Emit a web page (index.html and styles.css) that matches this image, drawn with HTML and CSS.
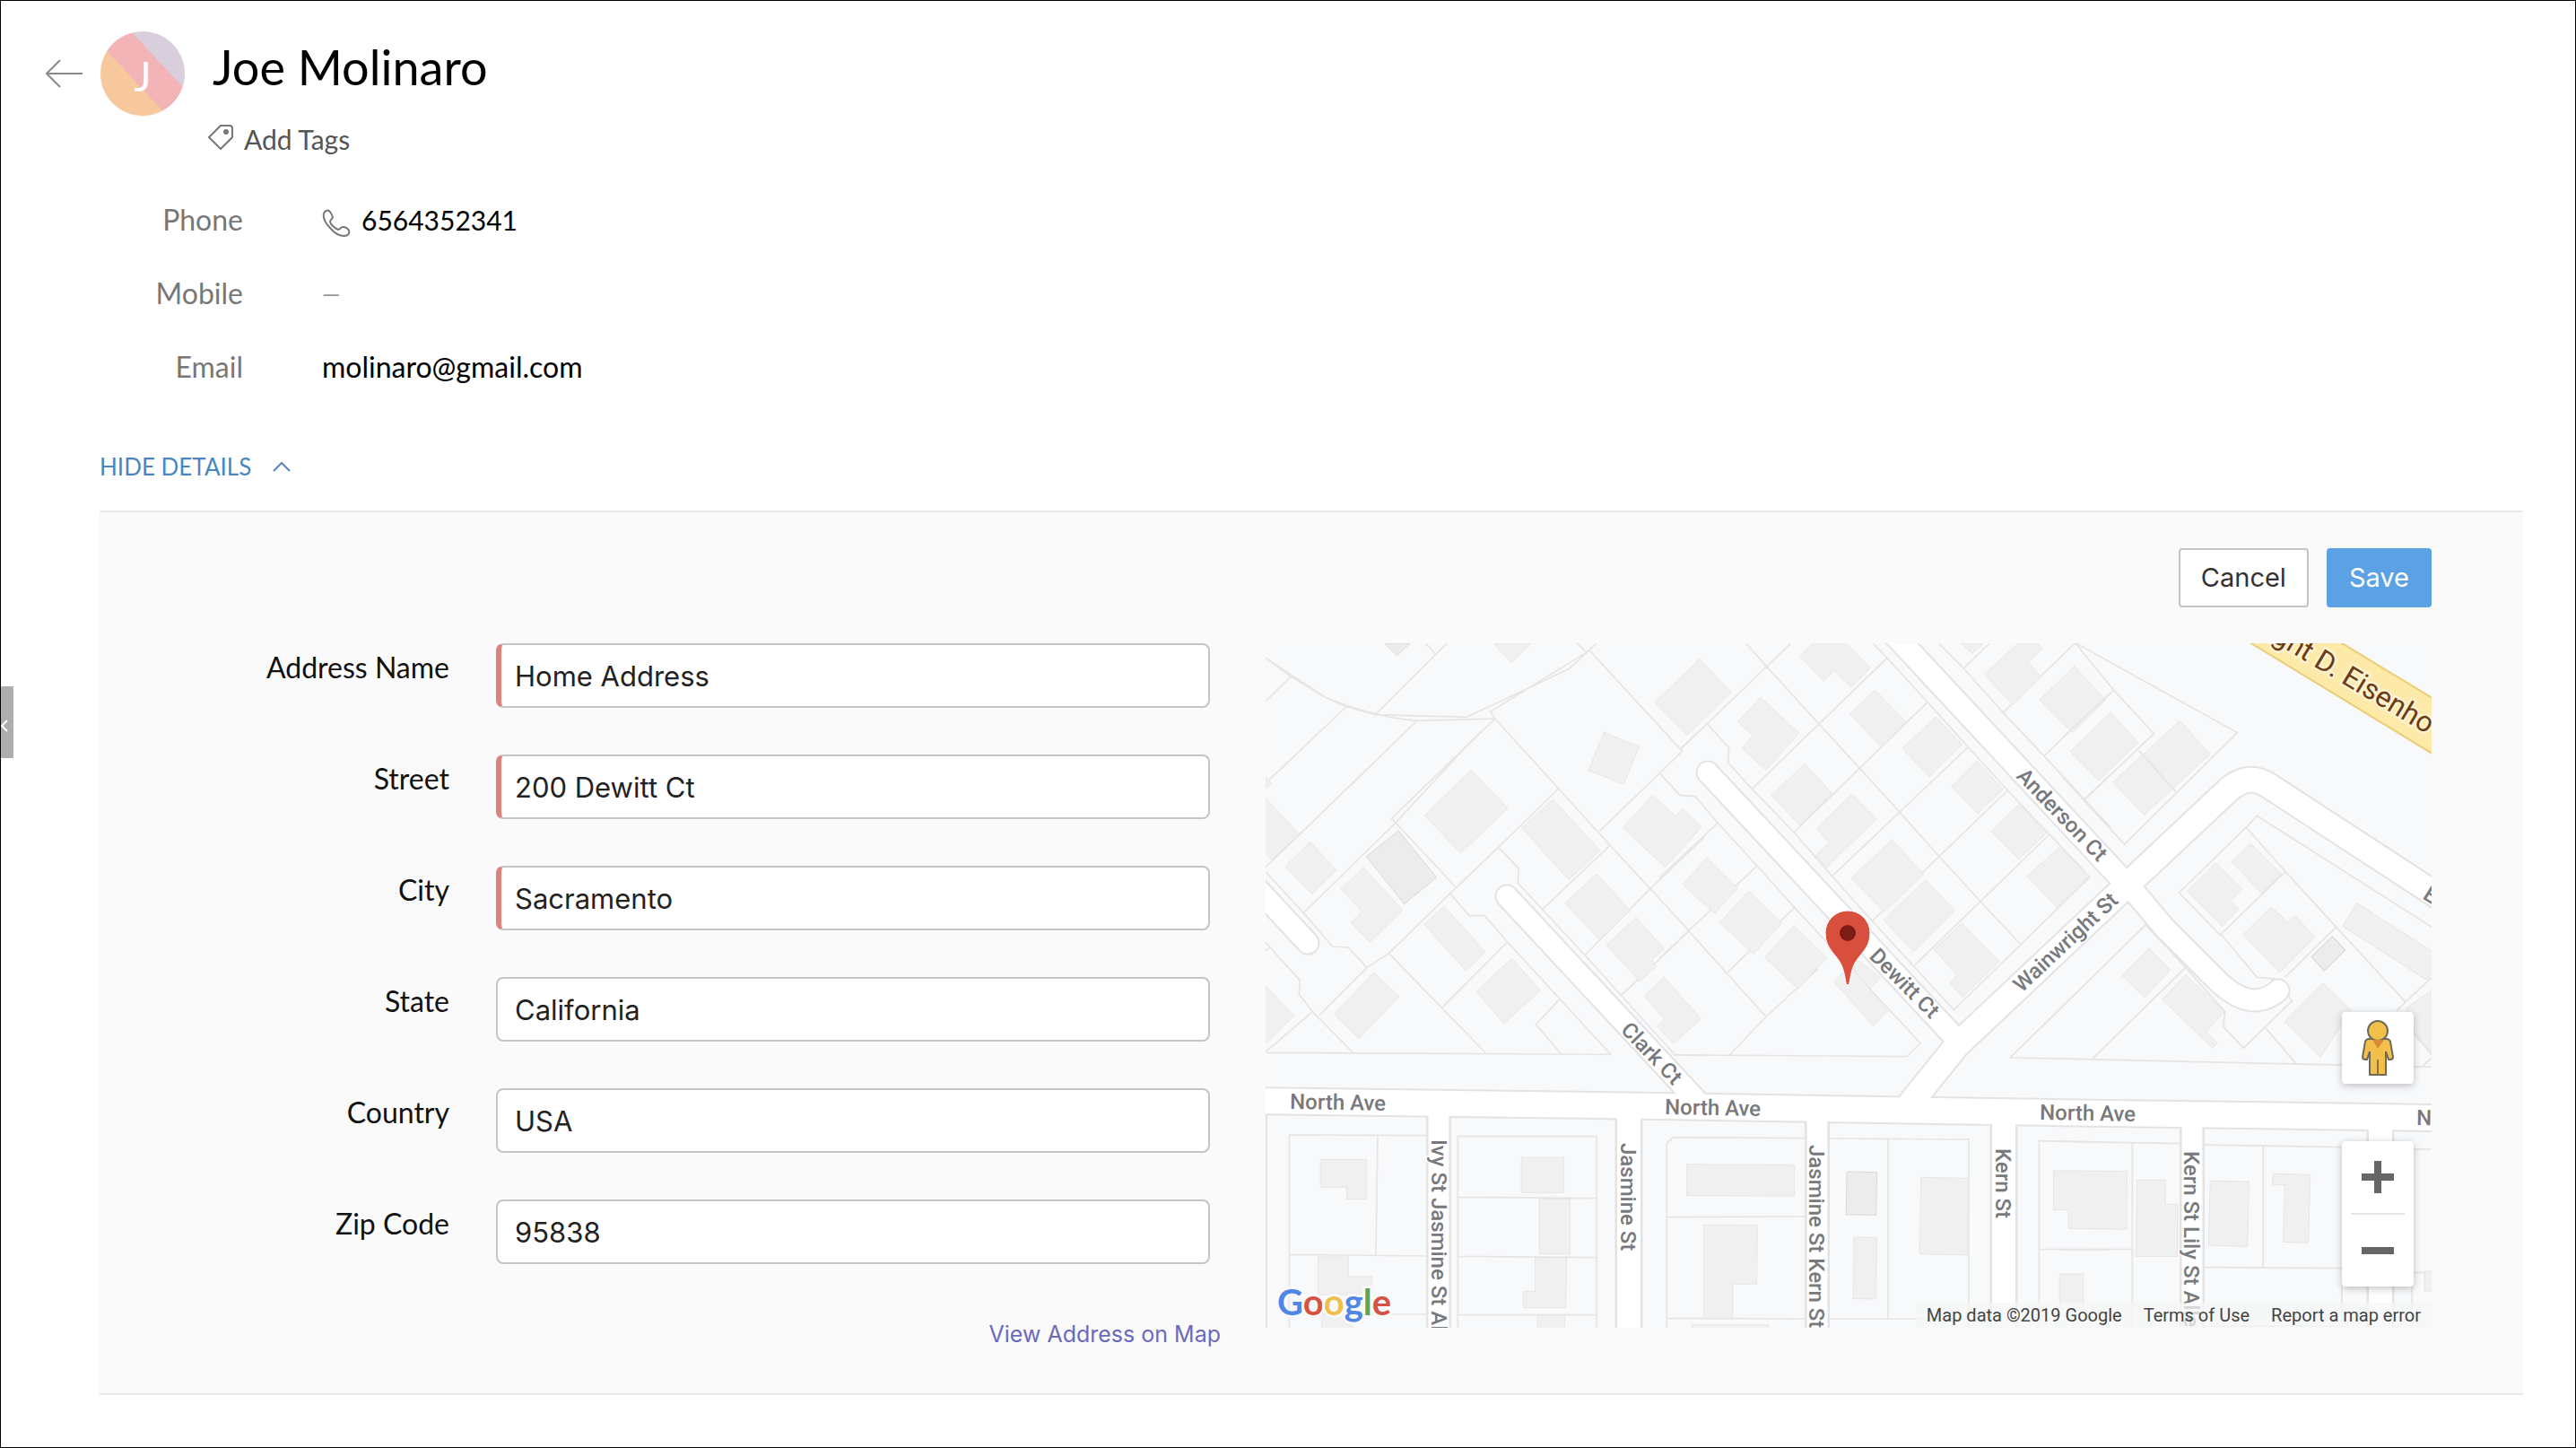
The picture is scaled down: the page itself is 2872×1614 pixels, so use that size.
FILE: index.html
```html
<!DOCTYPE html>
<html lang="en">
<head>
<meta charset="utf-8">
<meta name="viewport" content="width=device-width, initial-scale=1">
<title>Joe Molinaro</title>
<link rel="stylesheet" href="styles.css">
</head>
<body>
<div class="page">
  <button class="drawer-toggle" type="button" aria-label="Collapse panel">
    <svg width="8" height="14" viewBox="0 0 8 14"><path d="M7 1 1 7l6 6"/></svg>
  </button>

  <header class="contact-header">
    <button class="back" type="button" aria-label="Back">
      <svg width="41" height="32" viewBox="0 0 41 32"><path d="M16 1 1 16l15 15M1 16h40"/></svg>
    </button>
    <div class="avatar"><span>J</span></div>
    <div class="contact-title">
      <h1>Joe Molinaro</h1>
      <button class="add-tags" type="button">
        <svg width="28" height="28" viewBox="0 0 28 28"><path d="M14 1h10a3 3 0 0 1 3 3v10L14 27 1 14z"/><circle cx="20" cy="8" r="3"/></svg>
        <span>Add Tags</span>
      </button>
    </div>
  </header>

  <dl class="contact-info">
    <div class="info-row">
      <dt>Phone</dt>
      <dd>
        <svg class="phone-icon" width="32" height="32" viewBox="0 0 32 32"><path d="M2 5C3 2 6 1 8 2c2 2 3 4 4 7 0 2-3 3-3 5 1 4 5 7 9 9 2 0 3-3 5-3 3 0 6 2 7 4 1 3-1 6-5 6-5 0-11-3-16-9C4 16 1 10 2 5z"/></svg>
        <span class="phone-number">6564352341</span>
      </dd>
    </div>
    <div class="info-row">
      <dt>Mobile</dt>
      <dd class="empty">—</dd>
    </div>
    <div class="info-row">
      <dt>Email</dt>
      <dd>molinaro@gmail.com</dd>
    </div>
  </dl>

  <button class="hide-details" type="button">
    <span>HIDE DETAILS</span>
    <svg width="20" height="12" viewBox="0 0 20 12"><path d="m1 11 9-9 9 9"/></svg>
  </button>

  <form class="details">
    <div class="actions">
      <button class="btn btn-plain" type="button">Cancel</button>
      <button class="btn btn-primary" type="submit">Save</button>
    </div>
    <div class="details-body">
      <div class="fields">
        <div class="field"><label for="address-name">Address Name</label><input id="address-name" class="required" type="text" value="Home Address" required></div>
        <div class="field"><label for="street">Street</label><input id="street" class="required" type="text" value="200 Dewitt Ct" required></div>
        <div class="field"><label for="city">City</label><input id="city" class="required" type="text" value="Sacramento" required></div>
        <div class="field"><label for="state">State</label><input id="state" type="text" value="California"></div>
        <div class="field"><label for="country">Country</label><input id="country" type="text" value="USA"></div>
        <div class="field"><label for="zip">Zip Code</label><input id="zip" type="text" value="95838"></div>
        <a class="view-map" href="#map">View Address on Map</a>
      </div>

      <div class="map" id="map">
        <svg class="map-canvas" viewBox="1411 717 1300 763" preserveAspectRatio="xMidYMid slice">
          <!-- north-west sector -->
          <g transform="translate(1400 700) scale(.3333)">
            <path class="lot" d="M33 100 230 230Q400 300 540 310L800 303 785 280 905 205 1105 83 1140 51M33 100 118 162 230 230 300 262 400 290 705 298 905 205 1050 135 1112 78M33 245 118 162M45 508 302 264M33 800 538 312M400 290 640 51M568 51 600 86M1075 51 1105 80M1118 76 1427 412 1150 680M1422 402 1500 330M800 303 454 637 668 865M800 303 700 400 467 652 160 953M800 303 1013 537 1185 727 1320 872 1450 1013M1013 537 812 733 650 888 445 1088 372 1136 213 1295M812 733 880 805 877 853 1100 1093 1403 1428M1185 727 960 940M1320 872 1500 700M1320 872 1100 1095M1450 1013 1223 1228M33 815 160 953 257 1065 310 1068 372 1136M650 888 715 962 766 962 842 1050 1188 1426M842 1050 625 1268M445 1088 768 1420M33 1052 148 1178 145 1225 190 1283 325 1420M33 1080 45 1070"/>
            <path class="house dark" d="M430 51 473 92 517 51zM478 678 605 834 497 923 370 764z"/>
            <path class="house" d="M795 51 855 115 922 51zM1485 104 1590 215 1443 358 1335 248zM1165 348 1282 397 1232 523 1113 476zM720 475 843 603 686 753 565 627zM995 573 1152 745 1047 842 890 668zM1328 560 1405 630 1430 605 1492 665 1370 800 1228 668zM182 715 270 810 188 889 98 797zM360 801 491 943 382 1051 318 986 355 948 285 873zM630 930 768 1083 703 1146 564 992zM1140 823 1253 945 1150 1042 1035 920zM1273 968 1367 1073 1325 1110 1341 1132 1285 1182 1173 1060zM20 555 54 591 146 690 54 775 20 740zM20 490 33 497 52 520 20 547z"/>
          </g>
          <!-- north sector -->
          <g transform="translate(1850 700) scale(.3333)">
            <path class="lot" d="M72 405 440 51M290 51 358 128 535 322 673 472 805 617 935 763 1075 915 1210 1060M715 51 762 100 897 248 1033 398 1165 543 1305 690 1440 833 985 1277 712 980 578 830 450 683 310 538 230 450 233 400 162 322M762 100 310 538M897 248 450 683M1033 398 578 830M1165 543 712 980M1305 690 855 1127M2 487 70 560 120 563 195 652 327 795 452 935 873 1388 828 1433 55 1428M195 652 0 835M327 795 98 1013M452 935 230 1150M98 1013 357 1300M98 1013 0 1105M235 1428 357 1300 530 1140M935 51 1018 135 1150 283 1287 428 1422 573 1510 668M1018 135 1105 51M1150 283 1390 51M1287 428 1500 225M1422 573 1510 490"/>
            <path class="house" d="M338 232 468 352 357 475 277 403 313 360 262 315zM515 51 625 51 705 133 642 198 585 143 550 178 470 93zM722 207 826 315 744 398 637 288zM925 296 1013 390 904 497 813 403zM1062 444 1150 540 1065 621 977 530zM1205 588 1294 686 1203 774 1110 680zM1338 733 1438 830 1330 933 1230 830zM485 454 578 552 470 660 375 560zM645 555 727 638 560 800 522 762 567 718 525 670zM778 708 885 823 752 950 642 837zM890 842 988 945 850 1082 750 977zM1012 987 1137 1115 1015 1235 972 1187 995 1160 918 1075zM160 768 263 870 185 955 78 857zM298 880 410 988 315 1090 202 985zM450 995 560 1102 465 1207 352 1102zM583 1182 640 1130 765 1280 715 1330zM665 1110 740 1170 705 1205 650 1145zM1010 51 1047 86 1085 51zM1200 51 1265 51 1281 70 1233 115 1277 162 1183 257 1087 155zM1388 128 1493 240 1382 350 1272 240z"/>
          </g>
          <!-- north-east sector -->
          <g transform="translate(2300 560) scale(.3648 .3333)">
            <path class="house" d="M145 703 230 803 110 930 22 833zM357 730 450 843 248 1045 153 935zM573 1140 668 1243 608 1308 515 1202zM466 1205 548 1295 513 1332 537 1360 487 1418 380 1300z"/>
            <path class="lot" d="M38 470 533 770 188 1143 0 920M38 470 155 628 278 773 68 992M155 628 0 785M232 830 345 968M480 1447 355 1305 560 1087 593 1048 1130 1422M560 1087 680 1235 835 1420M680 1235 480 1447"/>
          </g>
          <!-- south-west sector -->
          <g transform="translate(1400 1080) scale(.3333)">
            <path class="lot" d="M33 278 190 143M37 280 1188 286M1018 100 937 185 1022 285M1400 288 1500 290M112 1200V555L572 557M408 560 402 957M112 955 575 960M112 1155H577M676 1200V560H1140V1200M676 763 1140 767M676 961 1140 965M676 1157H1140"/>
            <path class="house" d="M857-35 952 72 830 182 737 75zM395 12 480 93 345 233 262 152zM20 43 128 158 20 262zM1365 27 1490 167 1397 250 1342 193 1367 167 1300 90zM217 637H371V770H305V730H217zM208 963H310V1029H389V1090H208zM220 1157H323V1210H220zM889 630H1031V748H889zM949 768H1052V953H949zM935 965H1040L1037 1133H895V1078H935zM943 1158H1034V1210H943z"/>
          </g>
          <!-- south sector -->
          <g transform="translate(1850 1080) scale(.3333)">
            <path class="lot" d="M25 1200V583L47 563 487 566M25 830 487 828M25 1168 487 1170M570 567 1035 570V1200M765 570V1168M570 1170H1035M1270 1200V575L1500 579M1270 938H1500M1172 297 1500 303"/>
            <path class="house" d="M92 653 452 656V760L92 758zM148 856 328 857 326 1054H245V1170H148zM108 1190H365V1210H108zM875 697 1033 700 1031 957 870 954zM651 897 728 898 724 1104 648 1103z"/>
            <path class="house dark" d="M627 678 728 680 725 823 625 822z"/>
          </g>
          <!-- south-east sector -->
          <g transform="translate(2300 1040) scale(.3648 .366)">
            <path class="lot" d="M835-18 678 135M835-18 1047 210 1020 237M1047 210 1127 135M-162 380 253-25 375 105 495 240 490 285 552 350 700 207 688 190M375 105 90 383M620 290 712 397M0 383 1127 408M480 0 593 135 650 140M1072 305 1127 370M1127 380 1100 405M0 635 357 641M212 641V1204M0 965 212 963M430 645 852 652M612 648V1018M430 1018 852 1021M430 1197H852M852 1070V1204M1072 658H1130M1072 1034H1130M1067 1074V1204"/>
            <path class="house" d="M637-79 688-32 710-52 770 12 663 120 550 5zM898-91 1140 63 1140 110 1110 142 855-21zM263 46 328 112 250 196 181 130zM375 127 493 240 438 300 471 335 457 350 303 202zM795 153 880 235 787 378 678 270zM1140 165 1050 228 1072 300 1140 380zM-29 724 196 725 195 902 17 900V843H-29zM226 752H313V826H351L350 985H223zM-10 1038H62V1130H-10zM450 755 569 757 564 955 445 951zM642 733 756 736 750 944 673 941 678 766H641zM1105 1030H1140V1090H1105z"/>
            <path class="house dark" d="M823 10 863 52 798 115 760 72z"/>
          </g>
          <!-- streets: casing below, surface above -->
          <defs>
            <path id="north-ave" d="M1400 1227 1850 1233 2350 1241 2720 1246"/>
            <path id="narrow-streets" d="M1604 1234V1490M2026 1240V1490M2444 1242V1490"/>
            <path id="wide-streets" d="M1816 1234V1490M2234 1240V1490M2654 1246V1490"/>
            <path id="courts" d="M1680 999 1892 1227M1380 967 1458 1051M1904 861 2180 1157M2382 997 2413 1034 2474 1095Q2496 1115 2514 1115 2530 1114 2540 1104"/>
            <path id="anderson" d="M2093 687 2372 987"/>
            <path id="wainwright" d="M2128 1232 2182 1165 2372 986 2486 879Q2508 861 2530 876L2720 1000"/>
          </defs>
          <g class="street-casing">
            <use href="#north-ave" stroke-width="32"/>
            <use href="#narrow-streets" stroke-width="28"/>
            <use href="#wide-streets" stroke-width="31"/>
            <use href="#courts" stroke-width="27"/>
            <use href="#anderson" stroke-width="28"/>
            <use href="#wainwright" stroke-width="31"/>
            <path d="M1412 1242V1480" stroke-width="2"/>
          </g>
          <g class="street-surface">
            <use href="#north-ave" stroke-width="28"/>
            <use href="#narrow-streets" stroke-width="23"/>
            <use href="#wide-streets" stroke-width="26"/>
            <use href="#courts" stroke-width="23"/>
            <use href="#anderson" stroke-width="24"/>
            <use href="#wainwright" stroke-width="27"/>
          </g>
          <path class="highway" d="M2500 711 2500 700 2583 700 2720 783V845z"/>
          <text class="highway-name" transform="translate(2532 714) rotate(31)">ght D. Eisenho</text>
          <g class="street-name">
            <text transform="translate(1438 1236) rotate(1)">North Ave</text>
            <text transform="translate(1856 1242) rotate(1)">North Ave</text>
            <text transform="translate(2274 1248) rotate(1)">North Ave</text>
            <text transform="translate(2694 1254) rotate(1)">North Ave</text>
            <text transform="translate(1596 1270) rotate(90)">Ivy St Jasmine St Alley</text>
            <text transform="translate(1807 1274) rotate(90)">Jasmine St</text>
            <text transform="translate(2017 1276) rotate(90)">Jasmine St Kern St</text>
            <text transform="translate(2225 1280) rotate(90)">Kern St</text>
            <text transform="translate(2435 1283) rotate(90)">Kern St Lily St Alley</text>
            <text transform="translate(2247 866) rotate(46)">Anderson Ct</text>
            <text transform="translate(1806 1149) rotate(46)">Clark Ct</text>
            <text transform="translate(2083 1067) rotate(45)">Dewitt Ct</text>
            <text transform="translate(2254 1107) rotate(-43)">Wainwright St</text>
            <text transform="translate(2700 1001) rotate(32)">Eisenhower</text>
          </g>
          <!-- address pin -->
          <path class="pin" d="M2060 1098c-3 0-2-9-6-20-5-14-19-19-19-38a25 25 0 0 1 50 0c0 19-14 24-19 38-4 11-3 20-6 20z"/>
          <circle class="pin-dot" cx="2060" cy="1040" r="9"/>
        </svg>

        <div class="google-logo" aria-label="Google"><span class="blue">G</span><span class="red">o</span><span class="yellow">o</span><span class="blue">g</span><span class="green">l</span><span class="red">e</span></div>

        <div class="map-controls">
          <button class="map-button pegman" type="button" aria-label="Street View">
            <svg width="36" height="62" viewBox="0 0 36 62"><path class="body" d="M8 21h20c2 0 3 1 4 3l3 17c0 2-1 3-3 3h-2l-3-9v26H9V35l-3 9H4c-2 0-3-1-3-3l3-17c1-2 2-3 4-3z"/><path class="leg" d="M18 44v17"/><circle class="body" cx="18" cy="12" r="11"/><path class="scarf" d="M12 22h13l-7 10z"/></svg>
          </button>
          <div class="zoom">
            <button class="map-button" type="button" aria-label="Zoom in"><svg width="36" height="36" viewBox="0 0 36 36"><path d="M18 0v36M0 18h36"/></svg></button>
            <button class="map-button" type="button" aria-label="Zoom out"><svg width="36" height="36" viewBox="0 0 36 36"><path d="M0 18h36"/></svg></button>
          </div>
        </div>

        <div class="attribution">
          <span>Map data ©2019 Google</span>
          <a href="#terms">Terms of Use</a>
          <a href="#report">Report a map error</a>
        </div>
      </div>
    </div>
  </form>
</div>
</body>
</html>
```
FILE: styles.css
```css
* { box-sizing: border-box; }

body {
  margin: 0;
  background: #fff;
  color: #000;
  font-family: Lato, "Liberation Sans", sans-serif;
  font-size: 32px;
  line-height: 36px;
}

button {
  border: 0;
  padding: 0;
  background: none;
  color: inherit;
  font: inherit;
  cursor: pointer;
}

svg { display: block; fill: none; }

.page {
  position: relative;
  min-height: 100vh;
  padding: 34px 58px 58px 50px;
  border: 1px solid #000;
}

.drawer-toggle {
  position: absolute;
  left: 0;
  top: 764px;
  width: 14px;
  height: 80px;
  padding-top: 8px;
  background: #aeaeae;
}
.drawer-toggle svg { stroke: #fff; stroke-width: 2; }

/* Header */
.contact-header { display: flex; align-items: flex-start; }
.back {
  display: flex;
  align-items: center;
  width: 61px;
  height: 94px;
}
.back svg { stroke: #8a8a8a; stroke-width: 2; }
.avatar {
  display: flex;
  align-items: center;
  justify-content: center;
  width: 94px;
  height: 94px;
  padding-top: 6px;
  margin-right: 26px;
  border-radius: 50%;
  background: linear-gradient(47deg, #f6c89c 0 41%, #f2b4b6 41% 67%, #d9cfdc 67%);
  color: #fff;
  font-size: 46px;
  line-height: 48px;
}
.contact-title { padding-top: 10px; }
h1 {
  margin: 0 0 32px;
  padding-left: 5px;
  font-size: 54px;
  font-weight: 400;
  line-height: 60px;
}
.add-tags {
  display: flex;
  align-items: center;
  gap: 12px;
  color: #555;
  font-size: 30px;
}
.add-tags svg { margin-bottom: 4px; stroke: #777; stroke-width: 2; }
.add-tags circle { fill: #777; stroke: none; }

/* Contact info */
.contact-info { margin: 54px 0 0; }
.info-row {
  display: grid;
  grid-template-columns: 220px 1fr;
  column-gap: 88px;
  height: 82px;
}
dt { color: #777; text-align: right; }
dd { display: flex; gap: 12px; margin: 0; }
dd.empty { color: #999; font-size: 26px; }
.phone-icon { margin-top: 6px; stroke: #777; stroke-width: 2; }
.phone-number { font-size: 30px; }

.hide-details {
  display: flex;
  align-items: center;
  gap: 24px;
  margin: 29px 0 31px 60px;
  color: #4a86c0;
  font-size: 26px;
}
.hide-details svg { stroke: #5a86bd; stroke-width: 2; }

/* Address details */
.details {
  margin-left: 60px;
  padding: 40px 102px 48px 0;
  border-top: 2px solid #e9e9e9;
  border-bottom: 2px solid #e9e9e9;
  background: #fafafa;
}
.actions { display: flex; justify-content: flex-end; gap: 20px; margin-bottom: 40px; }
.btn {
  height: 66px;
  padding: 0 23px;
  border: 2px solid #c4c4c4;
  border-radius: 4px;
  font-family: Inter, "Liberation Sans", sans-serif;
  font-size: 29px;
}
.btn-plain { background: #fff; color: #333; }
.btn-primary { border-color: #5ba1e4; background: #5ba1e4; color: #fff; }

.details-body {
  display: grid;
  grid-template-columns: 1238fr 1300fr;
  column-gap: 62px;
  align-items: start;
}
.fields { display: flex; flex-direction: column; gap: 52px; }
.field {
  display: grid;
  grid-template-columns: 390px 1fr;
  column-gap: 52px;
}
.field label { padding-top: 9px; color: #111; text-align: right; }
.field input {
  width: 100%;
  height: 72px;
  padding: 0 19px;
  border: 2px solid #c4c5c9;
  border-radius: 8px;
  background: #fff;
  color: #222;
  font-family: Inter, "Liberation Sans", sans-serif;
  font-size: 31px;
}
.field .required { padding-left: 15px; border-left: 6px solid #df817c; }
.view-map {
  align-self: flex-end;
  margin: 8px -12px 0 0;
  color: #6b69bd;
  font-family: Inter, "Liberation Sans", sans-serif;
  font-size: 25px;
  text-decoration: none;
}

/* Map */
.map {
  position: relative;
  aspect-ratio: 1300 / 763;
  overflow: hidden;
  background: #f8f9fb;
  font-family: Roboto, "Liberation Sans", sans-serif;
}
.map-canvas { width: 100%; height: 100%; }
.lot { stroke: #e5e5e5; stroke-width: 5; }
.house { fill: #f0f0f0; stroke: #e0e0e0; stroke-width: 2; }
.house.dark { fill: #ececec; stroke: #d8d8d8; stroke-width: 3; }
.street-casing { stroke: #e3e3e3; stroke-linecap: round; }
.street-surface { stroke: #fff; stroke-linecap: round; }
.highway { fill: #fdeaa8; stroke: #ebcd74; stroke-width: 2; }
.highway-name {
  fill: #6d3b14;
  stroke: #fdf3d0;
  stroke-width: 5;
  paint-order: stroke;
  font-size: 32px;
}
.street-name {
  fill: #77797c;
  stroke: #fff;
  stroke-width: 3;
  paint-order: stroke;
  font-size: 24px;
  font-weight: 500;
}
.pin { fill: #d94f3d; stroke: #fff; stroke-width: 1; }
.pin-dot { fill: #7b1d16; }

.google-logo {
  position: absolute;
  left: 13px;
  bottom: 5px;
  font-family: Lato, "Liberation Sans", sans-serif;
  font-size: 40px;
  font-weight: 700;
  line-height: 48px;
  -webkit-text-stroke: 6px #f8f9fb;
  paint-order: stroke;
}
.blue { color: #5186e5; }
.red { color: #d65344; }
.yellow { color: #f0bf4c; }
.green { color: #58a55c; }

.map-controls {
  position: absolute;
  right: 20px;
  bottom: 46px;
  display: grid;
  gap: 64px;
}
.map-button {
  display: flex;
  align-items: center;
  justify-content: center;
  width: 80px;
  height: 80px;
}
.pegman, .zoom {
  border-radius: 4px;
  background: #fff;
  box-shadow: 0 2px 8px rgba(0, 0, 0, .25);
}
.body { fill: #f2bf4b; stroke: #6e6a5a; stroke-width: 2; }
.leg { stroke: #8a7340; stroke-width: 2; }
.scarf { fill: #d98a3c; }
.zoom svg { stroke: #666; stroke-width: 8; }
.zoom .map-button + .map-button::before {
  content: "";
  position: absolute;
  bottom: 80px;
  width: 60px;
  height: 2px;
  background: #e6e6e6;
}
.zoom .map-button + .map-button { margin-top: 2px; }

.attribution {
  position: absolute;
  right: 0;
  bottom: 0;
  display: flex;
  color: #444;
  font-size: 20px;
  line-height: 28px;
}
.attribution > * {
  padding: 0 12px;
  background: rgba(245, 245, 245, .75);
  color: inherit;
  text-decoration: none;
}
```
